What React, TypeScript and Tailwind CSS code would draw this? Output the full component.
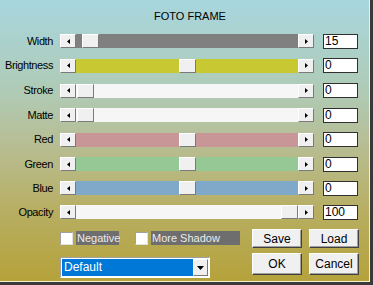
import React from "react";

type Row = { label: string; track: string; thumb: number; value: string; h: string };

const rows: Row[] = [
  { label: "Width", track: "bg-[#808080]", thumb: 6, value: "15", h: "h-[24px]" },
  { label: "Brightness", track: "bg-[#c8c832]", thumb: 103, value: "0", h: "h-[25px]" },
  { label: "Stroke", track: "bg-[#f6f6f6]", thumb: 1, value: "0", h: "h-[25px]" },
  { label: "Matte", track: "bg-[#f6f6f6]", thumb: 1, value: "0", h: "h-[24px]" },
  { label: "Red", track: "bg-[#c89696]", thumb: 103, value: "0", h: "h-[25px]" },
  { label: "Green", track: "bg-[#96c896]", thumb: 103, value: "0", h: "h-[24px]" },
  { label: "Blue", track: "bg-[#80a8c8]", thumb: 103, value: "0", h: "h-[24px]" },
  { label: "Opacity", track: "bg-[#f6f6f6]", thumb: 205, value: "100", h: "h-[24px]" },
];

const raised =
  "bg-[#f0f0f0] border border-t-white border-l-white border-r-[#7a7a7a] border-b-[#7a7a7a]";

function Arrow({ dir }: { dir: "left" | "right" | "down" }) {
  if (dir === "left")
    return (
      <svg width="3" height="5" viewBox="0 0 3 5">
        <polygon points="3,0 3,5 0,2.5" fill="#000" />
      </svg>
    );
  if (dir === "right")
    return (
      <svg width="3" height="5" viewBox="0 0 3 5">
        <polygon points="0,0 0,5 3,2.5" fill="#000" />
      </svg>
    );
  return (
    <svg width="7" height="4" viewBox="0 0 7 4">
      <polygon points="0,0 7,0 3.5,4" fill="#000" />
    </svg>
  );
}

function ScrollBar({ track, thumb }: { track: string; thumb: number }) {
  return (
    <div className="flex h-[14px] w-[254px]">
      <div className={`${raised} w-[16px] h-[14px] flex items-center justify-center`}>
        <Arrow dir="left" />
      </div>
      <div className={`relative w-[222px] h-[14px] ${track}`}>
        <div
          className={`absolute top-0 h-[14px] w-[17px] ${raised}`}
          style={{ left: thumb }}
        />
      </div>
      <div className={`${raised} w-[16px] h-[14px] flex items-center justify-center`}>
        <Arrow dir="right" />
      </div>
    </div>
  );
}

function Check({ label, w }: { label: string; w: string }) {
  return (
    <div className="flex items-center">
      <div className="w-[13px] h-[13px] bg-white border border-t-[#a0a0a0] border-l-[#a0a0a0] border-r-[#e0e0e0] border-b-[#e0e0e0]" />
      <div className={`ml-[3px] h-[14px] ${w} bg-[#6e6e6e] text-[#ececec] leading-[14px] pl-[1px]`}>
        {label}
      </div>
    </div>
  );
}

function Btn({ label, h }: { label: string; h: string }) {
  return (
    <div
      className={`w-[50px] ${h} bg-[#f0f0f0] border border-t-white border-l-white border-r-[#404040] border-b-[#404040] shadow-[inset_-1px_-1px_0_#a0a0a0] flex items-center justify-center text-black text-[12px]`}
    >
      {label}
    </div>
  );
}

export default function App() {
  return (
    <div
      className="w-[373px] h-[285px] overflow-hidden text-[11px] text-black bg-[linear-gradient(180deg,#a8d6de_0%,#afcbb6_32%,#b7bd92_52%,#b7ae62_75%,#b5a23a_100%)] border-r-[3px] border-b-[3px] border-[#3a3a3a]"
      style={{ fontFamily: '"Liberation Sans", Arial, sans-serif' }}
    >
      <div className="h-full border-r border-b border-[#f4f0d0]">
        <div className="pt-[10px] pl-[11px] text-center leading-[13px] text-[11px]">FOTO FRAME</div>
        <div className="mt-[6px] flex flex-col">
          {rows.map((r) => (
            <div key={r.label} className={`flex items-center ${r.h}`}>
              <div className="w-[53px] text-right leading-[13px] tracking-[-0.4px]">{r.label}</div>
              <div className="ml-[7px]">
                <ScrollBar track={r.track} thumb={r.thumb} />
              </div>
              <div className="ml-[9px] w-[35px] h-[15px] bg-white border border-[#303030] leading-[13px] pl-[1px] text-[12px]">
                {r.value}
              </div>
            </div>
          ))}
        </div>
        <div className="flex pl-[60px]">
          <div className="w-[192px] flex flex-col">
            <div className="mt-[7px] flex items-center gap-[16px]">
              <Check label="Negative" w="w-[43px]" />
              <Check label="More Shadow" w="w-[89px]" />
            </div>
            <div className="mt-[12px] w-[150px] h-[21px] bg-white border border-t-[#a0a0a0] border-l-[#a0a0a0] border-r-white border-b-white p-[1px] flex">
              <div className="flex-1 bg-[#0078d7] text-white leading-[17px] pl-[2px] text-[12px]">Default</div>
              <div className="w-[15px] bg-[#f0f0f0] border border-t-white border-l-white border-r-[#7a7a7a] border-b-[#7a7a7a] flex items-center justify-center">
                <Arrow dir="down" />
              </div>
            </div>
          </div>
          <div className="flex flex-col">
            <div className="mt-[5px] flex gap-[7px]">
              <Btn label="Save" h="h-[19px]" />
              <Btn label="Load" h="h-[19px]" />
            </div>
            <div className="mt-[5px] flex gap-[7px]">
              <Btn label="OK" h="h-[22px]" />
              <Btn label="Cancel" h="h-[22px]" />
            </div>
          </div>
        </div>
      </div>
    </div>
  );
}
